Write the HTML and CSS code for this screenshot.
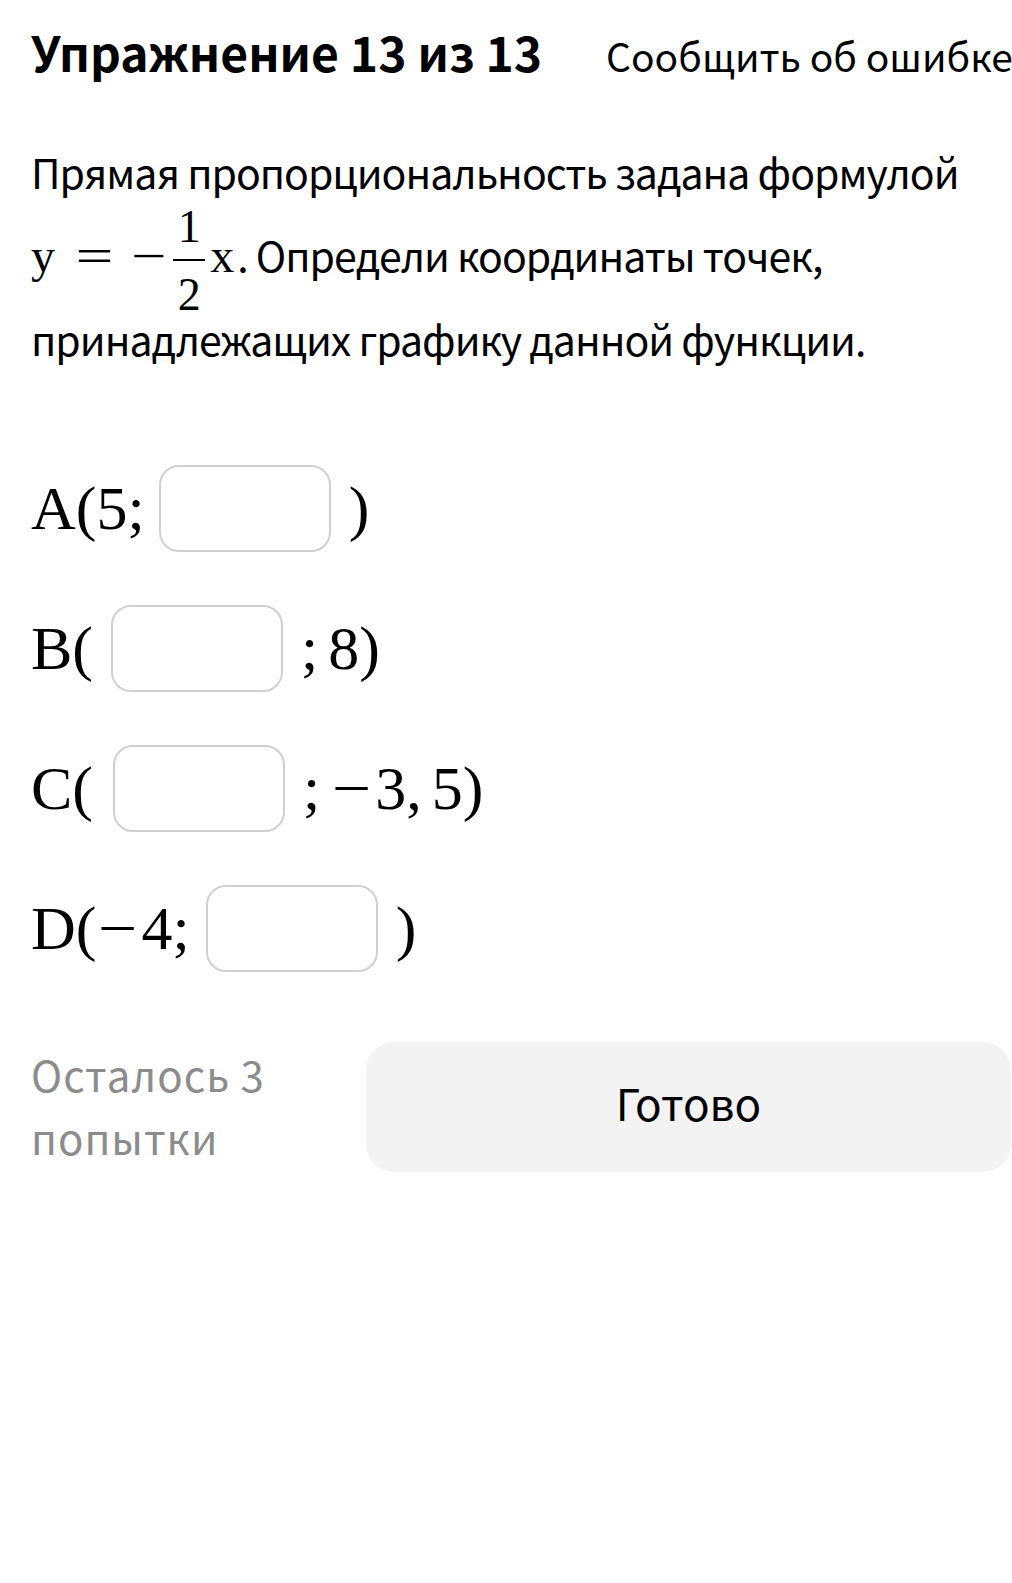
FILE: index.html
```html
<!DOCTYPE html>
<html lang="ru">
<head>
<meta charset="utf-8">
<link rel="stylesheet" href="styles.css">
</head>
<body>
<div class="page">
  <header class="head">
    <h1 class="title">Упражнение 13 из 13</h1>
    <span class="report">Сообщить об ошибке</span>
  </header>
  <p class="question">Прямая пропорциональность задана формулой <span class="math">y<span class="op">=</span><span class="minus">−</span><span class="frac"><span class="num">1</span><span class="bar"></span><span class="den">2</span></span>x</span>. Определи координаты точек, принадлежащих графику данной функции.</p>
  <div class="items">
    <div class="item"><span class="m">A(5;</span><span class="box box-a"></span><span class="m">)</span></div>
    <div class="item"><span class="m">B(</span><span class="box"></span><span class="m">;<span class="sp"></span>8)</span></div>
    <div class="item"><span class="m">C(</span><span class="box box-c"></span><span class="m">;<span class="sp"></span><span class="neg">−</span>3,<span class="sp"></span>5)</span></div>
    <div class="item"><span class="m">D(<span class="neg">−</span>4;</span><span class="box box-d"></span><span class="m">)</span></div>
  </div>
  <div class="footer">
    <div class="attempts">Осталось 3<br>попытки</div>
    <button class="done">Готово</button>
  </div>
</div>
</body>
</html>
```
FILE: styles.css
```css
html, body {
  margin: 0;
  padding: 0;
  background: #fff;
  overflow: hidden;
}
body {
  font-family: "Noto Sans CJK SC", "Noto Sans", sans-serif;
  color: #000;
}
.page {
  padding: 19px 0 0 31px;
  width: 1100px;
}
.head {
  display: flex;
  align-items: baseline;
  gap: 64px;
}
.title {
  margin: 0;
  font-size: 48px;
  font-weight: 700;
  line-height: 64px;
}
.report {
  font-size: 39px;
  white-space: nowrap;
}
.question {
  margin: 47px 0 0;
  font-size: 41px;
  letter-spacing: -1px;
  line-height: 83px;
  width: 975px;
}
.math {
  font-family: "Liberation Serif", serif;
  font-size: 48px;
  letter-spacing: 0;
  white-space: nowrap;
  margin-right: 3px;
}
.op {
  display: inline-block;
  transform: scaleX(1.4);
  margin: 0 27px 0 26px;
}
.minus {
  display: inline-block;
  transform: scaleX(1.3);
}
.frac {
  display: inline-flex;
  flex-direction: column;
  align-items: center;
  vertical-align: 30px;
  margin: -20px 5px -40px 11px;
  font-size: 46px;
  line-height: 30px;
}
.num, .den {
  display: block;
  height: 30px;
}
.bar {
  display: block;
  width: 32px;
  height: 2px;
  margin: 17px 0 19px;
  background: #000;
}
.items {
  margin-top: 85px;
  display: flex;
  flex-direction: column;
  gap: 53px;
}
.item {
  display: flex;
  align-items: center;
  height: 87px;
}
.m {
  font-family: "Liberation Serif", serif;
  font-size: 62px;
}
.sp {
  display: inline-block;
  width: 10px;
}
.neg {
  display: inline-block;
  transform: scaleX(1.12);
  margin: 0 6px 0 4px;
}
.box {
  width: 168px;
  height: 83px;
  border: 2px solid #d0d0d0;
  border-radius: 20px;
  margin: 0 18px 0 18px;
}
.box-a { margin-left: 14px; }
.box-c { margin-left: 20px; }
.box-d { margin-left: 16px; }
.footer {
  margin-top: 70px;
  display: flex;
  align-items: flex-start;
}
.attempts {
  width: 335px;
  color: #8c8c8c;
  font-size: 42px;
  letter-spacing: 1px;
  line-height: 63px;
}
.done {
  width: 645px;
  height: 130px;
  padding: 0 0 10px;
  border: none;
  border-radius: 28px;
  background: #f3f3f3;
  font-family: "Noto Sans CJK SC", "Noto Sans", sans-serif;
  font-size: 44px;
  color: #000;
}
```
